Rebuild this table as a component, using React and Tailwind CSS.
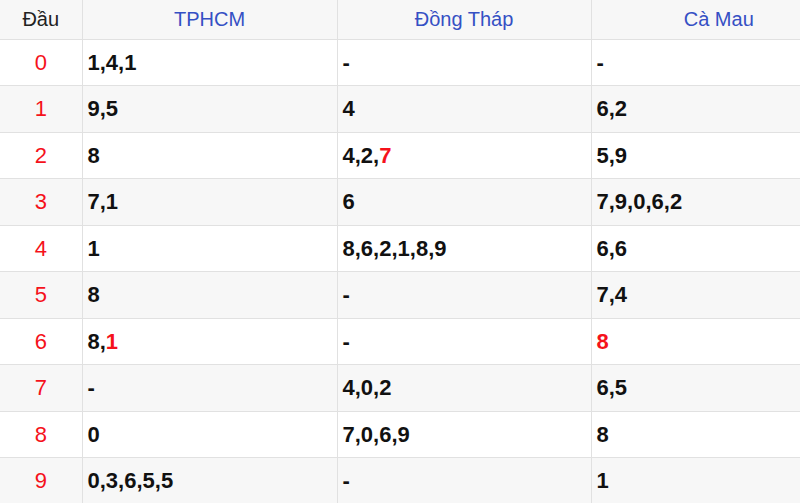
import React from 'react';

const rows = [
  { d: '0', cols: [['1,4,1'], ['-'], ['-']] },
  { d: '1', cols: [['9,5'], ['4'], ['6,2']] },
  { d: '2', cols: [['8'], ['4,2,', '7'], ['5,9']] },
  { d: '3', cols: [['7,1'], ['6'], ['7,9,0,6,2']] },
  { d: '4', cols: [['1'], ['8,6,2,1,8,9'], ['6,6']] },
  { d: '5', cols: [['8'], ['-'], ['7,4']] },
  { d: '6', cols: [['8,', '1'], ['-'], ['', '8']] },
  { d: '7', cols: [['-'], ['4,0,2'], ['6,5']] },
  { d: '8', cols: [['0'], ['7,0,6,9'], ['8']] },
  { d: '9', cols: [['0,3,6,5,5'], ['-'], ['1']] },
];

function Value({ parts }) {
  return (
    <>
      {parts[0]}
      {parts[1] && <span className="text-[#f5121b]">{parts[1]}</span>}
    </>
  );
}

export default function App() {
  return (
    <div className="w-[800px] h-[503px] overflow-hidden bg-white font-['Liberation_Sans',Arial,sans-serif]">
      <table className="w-[846px] table-fixed border-collapse">
        <colgroup>
          <col className="w-[82px]" />
          <col className="w-[255px]" />
          <col className="w-[254px]" />
          <col className="w-[255px]" />
        </colgroup>
        <thead>
          <tr className="bg-[#f7f7f7] h-[39px]">
            <th className="border-r border-b border-[#e1e1e1] text-center text-[20px] font-normal text-[#222]">Đầu</th>
            <th className="border-x border-b border-[#e1e1e1] text-center text-[20px] font-normal text-[#3550c4]">TPHCM</th>
            <th className="border-x border-b border-[#e1e1e1] text-center text-[20px] font-normal text-[#3550c4]">Đồng Tháp</th>
            <th className="border-l border-b border-[#e1e1e1] text-center text-[20px] font-normal text-[#3550c4]">Cà Mau</th>
          </tr>
        </thead>
        <tbody>
          {rows.map((r, i) => (
            <tr key={r.d} className={`h-[46.5px] ${i % 2 ? 'bg-[#f7f7f7]' : 'bg-white'}`}>
              <td className="border-r border-b border-[#e1e1e1] text-center text-[22px] text-[#f5121b]">{r.d}</td>
              {r.cols.map((c, j) => (
                <td key={j} className="border-x border-b border-[#e1e1e1] pl-[5px] text-[22px] font-bold text-[#111]">
                  <Value parts={c} />
                </td>
              ))}
            </tr>
          ))}
        </tbody>
      </table>
    </div>
  );
}
